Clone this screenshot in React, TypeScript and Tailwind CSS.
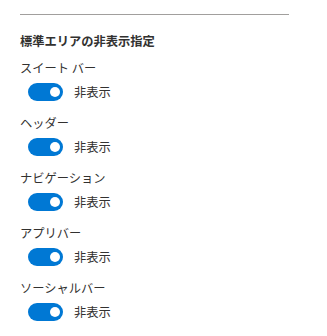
import React from 'react';

const items = ['スイート バー', 'ヘッダー', 'ナビゲーション', 'アプリバー', 'ソーシャルバー'];

function Toggle({ label }: { label: string }) {
  return (
    <div className="flex items-center pl-2 mt-[5px] h-[17.5px]">
      <button
        type="button"
        className="flex h-[17.5px] w-[35px] items-center justify-end rounded-full bg-[#0078d4] pr-[3px]"
      >
        <span className="block h-[10.5px] w-[10.5px] rounded-full bg-white" />
      </button>
      <span className="ml-[11px] text-[12.25px] leading-5 text-[#323130]">{label}</span>
    </div>
  );
}

export default function App() {
  return (
    <div
      className="min-h-screen w-full bg-white px-5 pt-[14px]"
      style={{ fontFamily: '"Noto Sans CJK JP", "Noto Sans", sans-serif' }}
    >
      <div className="h-px w-[269px] bg-[#a19f9d]" />
      <h2 className="mt-[16px] text-[12.25px] font-bold leading-5 text-[#323130]">
        標準エリアの非表示指定
      </h2>
      <div className="mt-[7px] flex flex-col gap-[12.5px]">
        {items.map((item) => (
          <div key={item}>
            <div className="text-[12.25px] leading-5 text-[#323130]">{item}</div>
            <Toggle label="非表示" />
          </div>
        ))}
      </div>
    </div>
  );
}
